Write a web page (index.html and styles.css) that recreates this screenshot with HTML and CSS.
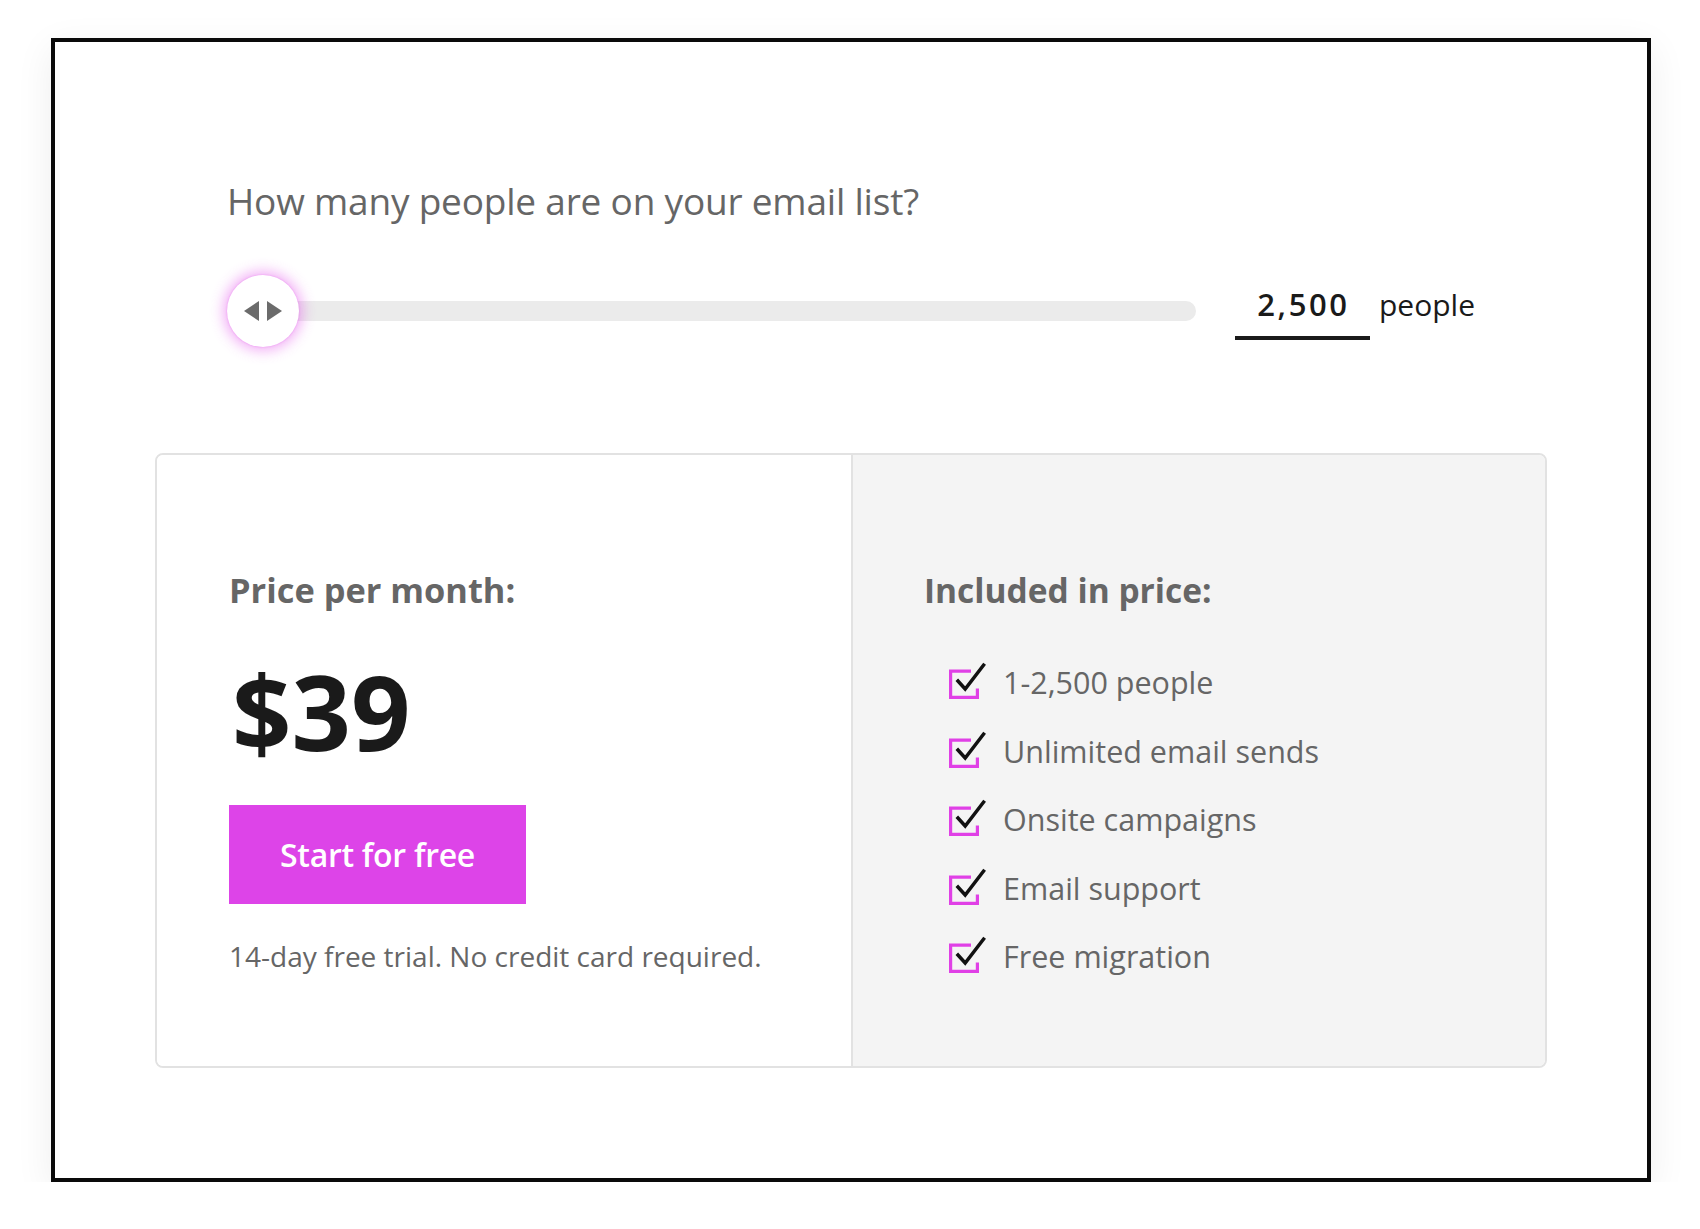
FILE: index.html
```html
<!DOCTYPE html>
<html lang="en">
<head>
<meta charset="utf-8">
<title>Pricing</title>
<link rel="stylesheet" href="styles.css">
</head>
<body>
<div class="frame">
  <section class="calc">
    <h2 class="question">How many people are on your email list?</h2>
    <div class="slider-row">
      <div class="slider">
        <div class="track"></div>
        <div class="thumb">
          <svg width="38" height="20" viewBox="0 0 38 20" aria-hidden="true">
            <polygon points="0,10 15,0 15,20" fill="#6b6b6b"/>
            <polygon points="23,0 38,10 23,20" fill="#6b6b6b"/>
          </svg>
        </div>
      </div>
      <div class="count">
        <div class="count-box">2,500</div>
        <span class="count-label">people</span>
      </div>
    </div>
  </section>

  <div class="card">
    <div class="col col-price">
      <h3 class="col-title">Price per month:</h3>
      <div class="price">$39</div>
      <a class="cta" href="#">Start for free</a>
      <p class="note">14-day free trial. No credit card required.</p>
    </div>
    <div class="col col-incl">
      <h3 class="col-title">Included in price:</h3>
      <ul class="features">
        <li class="feature"><svg class="check" width="40" height="40" viewBox="0 0 40 40" aria-hidden="true"><path d="M25 9.2H4.6V35.4H31.4V26.6" fill="none" stroke="#e040e6" stroke-width="3.2"/><path d="M10.8 17.8L19.2 27L38.6 1.8" fill="none" stroke="#111" stroke-width="3.5"/></svg><span>1-2,500 people</span></li>
        <li class="feature"><svg class="check" width="40" height="40" viewBox="0 0 40 40" aria-hidden="true"><path d="M25 9.2H4.6V35.4H31.4V26.6" fill="none" stroke="#e040e6" stroke-width="3.2"/><path d="M10.8 17.8L19.2 27L38.6 1.8" fill="none" stroke="#111" stroke-width="3.5"/></svg><span>Unlimited email sends</span></li>
        <li class="feature"><svg class="check" width="40" height="40" viewBox="0 0 40 40" aria-hidden="true"><path d="M25 9.2H4.6V35.4H31.4V26.6" fill="none" stroke="#e040e6" stroke-width="3.2"/><path d="M10.8 17.8L19.2 27L38.6 1.8" fill="none" stroke="#111" stroke-width="3.5"/></svg><span>Onsite campaigns</span></li>
        <li class="feature"><svg class="check" width="40" height="40" viewBox="0 0 40 40" aria-hidden="true"><path d="M25 9.2H4.6V35.4H31.4V26.6" fill="none" stroke="#e040e6" stroke-width="3.2"/><path d="M10.8 17.8L19.2 27L38.6 1.8" fill="none" stroke="#111" stroke-width="3.5"/></svg><span>Email support</span></li>
        <li class="feature"><svg class="check" width="40" height="40" viewBox="0 0 40 40" aria-hidden="true"><path d="M25 9.2H4.6V35.4H31.4V26.6" fill="none" stroke="#e040e6" stroke-width="3.2"/><path d="M10.8 17.8L19.2 27L38.6 1.8" fill="none" stroke="#111" stroke-width="3.5"/></svg><span>Free migration</span></li>
      </ul>
    </div>
  </div>
</div>
</body>
</html>
```

FILE: styles.css
```css
* { box-sizing: border-box; }

html, body {
  margin: 0;
  padding: 0;
  background: #ffffff;
}

body {
  font-family: "Open Sans", "Liberation Sans", sans-serif;
  color: #666666;
  padding-top: 38px;
}

.frame {
  width: 1600px;
  margin: 0 0 0 51px;
  border: 4px solid #0a0a0a;
  background: #ffffff;
  box-shadow: 0 10px 36px rgba(0, 0, 0, 0.07);
  padding: 137px 0 110px 0;
}

.calc {
  padding: 0 172px;
}

.question {
  margin: 0;
  font-size: 37px;
  line-height: 44px;
  font-weight: 400;
  color: #666666;
  letter-spacing: -0.2px;
}

.slider-row {
  margin-top: 52px;
  display: flex;
  align-items: center;
  height: 72px;
}

.slider {
  flex: 1;
  position: relative;
  height: 72px;
  display: flex;
  align-items: center;
}

.track {
  width: 100%;
  height: 20px;
  border-radius: 10px;
  background: #ebebeb;
}

.thumb {
  position: absolute;
  left: 0;
  top: 0;
  width: 72px;
  height: 72px;
  border-radius: 50%;
  background: #ffffff;
  box-shadow: 0 0 13px 4px rgba(226, 80, 236, 0.45), 0 0 2px rgba(226, 80, 236, 0.5);
  display: flex;
  align-items: center;
  justify-content: center;
}

.thumb svg { display: block; }

.count {
  display: flex;
  align-items: baseline;
  margin-left: 39px;
}

.count-box {
  width: 135px;
  text-align: center;
  font-size: 31px;
  line-height: 44px;
  font-weight: 600;
  letter-spacing: 2.6px;
  color: #1a1a1a;
  padding-bottom: 10px;
  border-bottom: 4px solid #1a1a1a;
  padding-left: 2px;
}

.count-label {
  margin-left: 9px;
  font-size: 30px;
  line-height: 44px;
  color: #1a1a1a;
}

.card {
  margin: 106px 100px 0 100px;
  border: 2px solid #e2e2e2;
  border-radius: 8px;
  overflow: hidden;
  display: grid;
  grid-template-columns: 1fr 1fr;
}

.col {
  padding-top: 115px;
}

.col-price {
  padding-left: 72px;
  padding-bottom: 93px;
  background: #ffffff;
}

.col-incl {
  padding-left: 71px;
  padding-bottom: 90px;
  background: #f4f4f4;
  border-left: 2px solid #e2e2e2;
}

.col-title {
  margin: 0;
  font-size: 33.5px;
  line-height: 40px;
  font-weight: 700;
  color: #666666;
}

.col-price .col-title {
  font-size: 34.4px;
}

.price {
  margin: 49px 0 0 3px;
  font-size: 104px;
  line-height: 104px;
  font-weight: 700;
  color: #1a1a1a;
  letter-spacing: 0;
}

.cta {
  margin-top: 42px;
  width: 297px;
  height: 99px;
  background: #dd44e8;
  color: #ffffff;
  text-decoration: none;
  font-size: 32px;
  font-weight: 600;
  letter-spacing: -0.3px;
  display: flex;
  align-items: center;
  justify-content: center;
}

.note {
  margin: 36px 0 0 0;
  font-size: 28px;
  line-height: 32px;
  color: #666666;
}

.features {
  list-style: none;
  margin: 52px 0 0 22px;
  padding: 0;
  display: flex;
  flex-direction: column;
  gap: 28.6px;
}

.feature {
  display: flex;
  align-items: center;
  height: 40px;
  gap: 17px;
  font-size: 30.5px;
  line-height: 40px;
  color: #666666;
}

.check {
  display: block;
  flex: none;
  overflow: visible;
}
```
